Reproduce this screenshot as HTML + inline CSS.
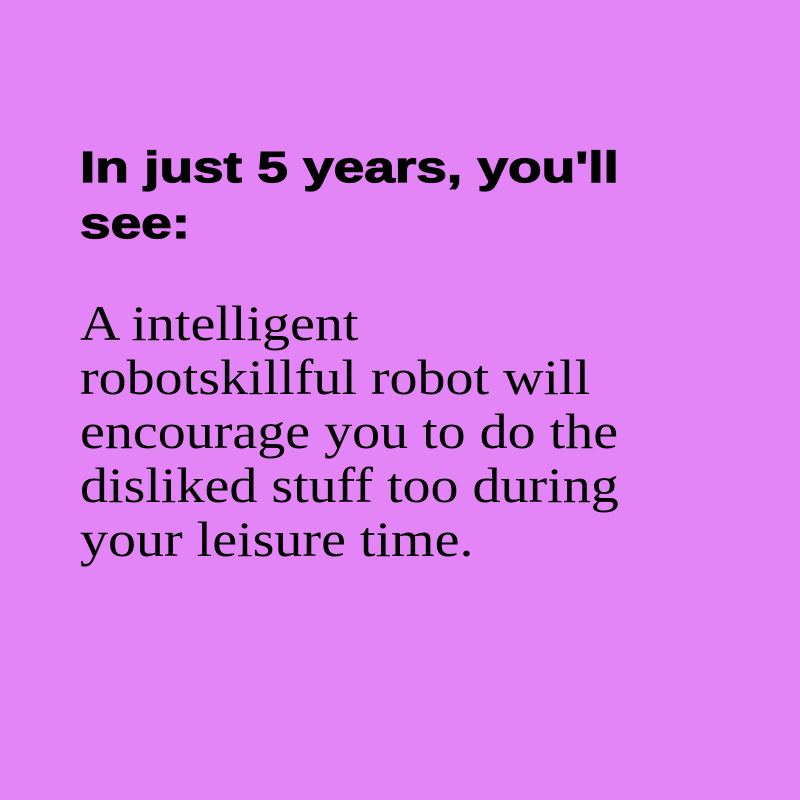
<!DOCTYPE html>
<html><head><meta charset="utf-8"><style>
html,body{margin:0;padding:0;}
body{width:800px;height:800px;background:#e384f7;position:relative;overflow:hidden;}
h1{position:absolute;left:80px;top:140px;margin:0;width:700px;font-family:"Liberation Sans",sans-serif;font-weight:bold;font-size:44px;line-height:56px;color:#000;transform:scaleX(1.25);transform-origin:0 0;-webkit-text-stroke:1.2px #000;white-space:nowrap;}
p{position:absolute;left:80px;top:296px;margin:0;width:700px;font-family:"Liberation Serif",serif;font-size:50px;line-height:54px;color:#000;transform:scaleX(1.12);transform-origin:0 0;white-space:nowrap;}
</style></head><body>
<h1>In just 5 years, you'll<br>see:</h1>
<p>A intelligent<br>robotskillful robot will<br>encourage you to do the<br>disliked stuff too during<br>your leisure time.</p>
</body></html>
